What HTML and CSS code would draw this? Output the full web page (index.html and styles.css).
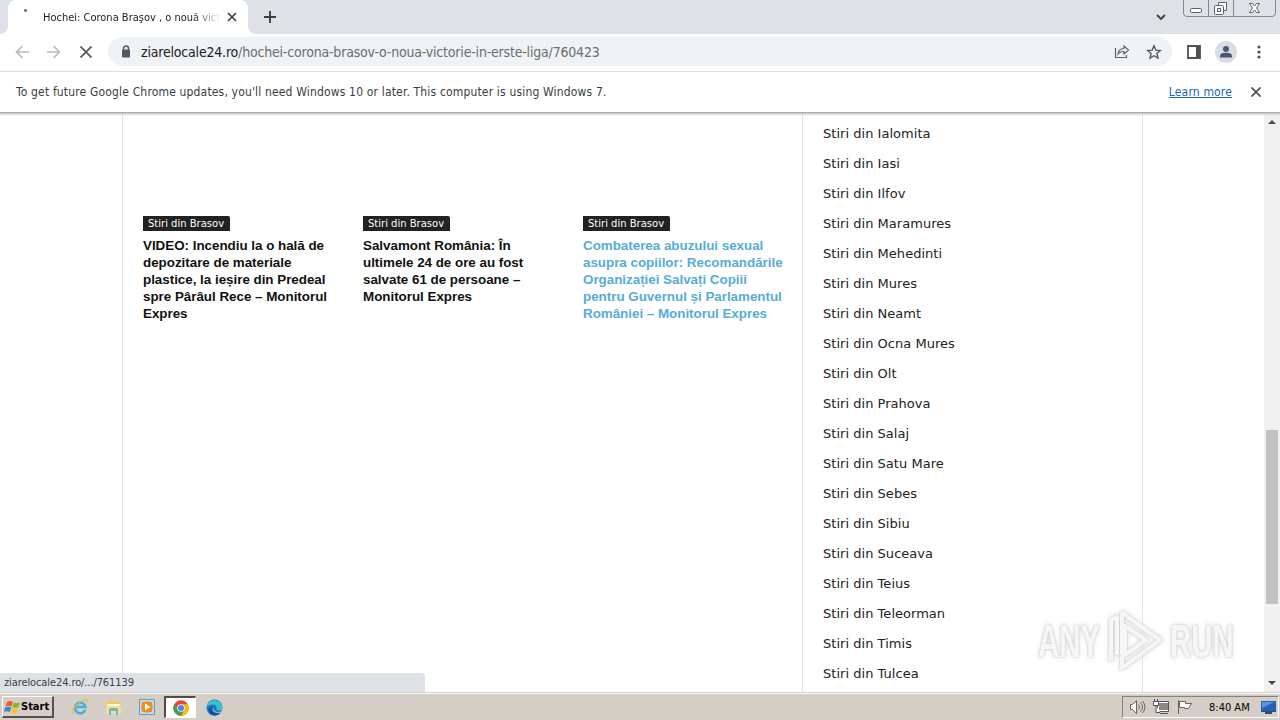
FILE: index.html
```html
<!DOCTYPE html>
<html lang="ro">
<head>
<meta charset="utf-8">
<title>Hochei: Corona Braşov , o nouă victorie</title>
<link rel="stylesheet" href="styles.css">
</head>
<body>
<div class="desktop">
  <header class="tabstrip">
    <div class="strip-left"></div>
    <div class="tab">
      <span class="spinner"></span>
      <span class="tab-title">Hochei: Corona Braşov , o nouă vict</span>
      <svg class="tab-close" width="10" height="10" viewBox="0 0 10 10"><path d="M1 1l8 8M9 1l-8 8" stroke="#3c4043" stroke-width="1.7"/></svg>
    </div>
    <div class="strip-right">
      <svg class="plus" width="12" height="12" viewBox="0 0 12 12"><path d="M6 0v12M0 6h12" stroke="#3c4043" stroke-width="1.9"/></svg>
      <svg class="chevron" width="10" height="7" viewBox="0 0 10 7"><path d="M1 1l4 4 4-4" fill="none" stroke="#3c4043" stroke-width="1.9"/></svg>
      <svg class="winbuttons" width="94" height="18" viewBox="0 0 94 18" fill="none">
        <path d="M.5 0v13q0 3.500 3.500 3.500h85q3.500 0 3.500-3.500V0M25.500 0v16.500M50.500 0v16.500" stroke="#83878f"/>
        <rect x="7.500" y="8.500" width="11" height="4" rx="1" fill="#fff" stroke="#5d6169"/>
        <path d="M35.500 5V2.500h8v8H41" fill="#fff" stroke="#5d6169"/>
        <rect x="31.500" y="5.500" width="9" height="9" rx="1" fill="#fff" stroke="#5d6169"/>
        <rect x="34.500" y="8.500" width="3" height="3" stroke="#5d6169"/>
        <path d="M66.500 3.500h3l2 2.500 2-2.500h3l-3 4.500 3 4.500h-3l-2-2.500-2 2.500h-3l3-4.500z" fill="#fff" stroke="#5d6169"/>
      </svg>
    </div>
  </header>

  <nav class="toolbar">
    <svg class="back" width="14" height="14" viewBox="0 0 14 14"><path d="M14 7H1.500M7.500 1l-6 6 6 6" fill="none" stroke="#b8babd" stroke-width="1.700"/></svg>
    <svg class="forward" width="14" height="14" viewBox="0 0 14 14"><path d="M0 7h12.500M6.500 1l6 6-6 6" fill="none" stroke="#b8babd" stroke-width="1.700"/></svg>
    <svg class="stop" width="12" height="12" viewBox="0 0 12 12"><path d="M.5.5l11 11M11.500.5l-11 11" stroke="#55595d" stroke-width="1.800"/></svg>
    <div class="omnibox">
      <svg class="lock" width="10" height="13" viewBox="0 0 10 13"><path d="M2.500 5V3.500a2.500 2.500 0 0 1 5 0V5" fill="none" stroke="#55595e" stroke-width="1.500"/><rect x="1" y="4.500" width="8" height="8" rx="1" fill="#55595e"/></svg>
      <span class="url"><b>ziarelocale24.ro</b>/hochei-corona-brasov-o-noua-victorie-in-erste-liga/760423</span>
      <svg class="share" width="16" height="15" viewBox="0 0 16 15" fill="none" stroke="#5f6368" stroke-width="1.200"><path d="M1.500 4v9.500h11V11"/><path d="M4 10q.5-5 6-5.500V2l4.500 4-4.500 4V7.500Q6 7.500 4 10z"/></svg>
      <svg class="star" width="16" height="16" viewBox="0 0 16 16"><path d="M8 1.800l1.800 4.300 4.600.4-3.500 3 1.100 4.600L8 11.700l-4 2.400 1.100-4.600-3.500-3 4.600-.4z" fill="none" stroke="#55595e" stroke-width="1.400"/></svg>
    </div>
    <svg class="panel" width="14" height="14" viewBox="0 0 14 14"><path d="M1 1h12v12H1z" fill="none" stroke="#4d5156" stroke-width="1.800"/><path d="M9 1h4v12H9z" fill="#4d5156"/></svg>
    <svg class="avatar" width="22" height="22" viewBox="0 0 22 22"><circle cx="11" cy="11" r="11" fill="#dadee3"/><circle cx="11" cy="8" r="3" fill="#4a5677"/><path d="M5 16.500v-1.500q0-3.200 6-3.200t6 3.200v1.500z" fill="#4a5677"/></svg>
    <svg class="dots" width="4" height="14" viewBox="0 0 4 14" fill="#4d5156"><circle cx="2" cy="2" r="1.600"/><circle cx="2" cy="7" r="1.600"/><circle cx="2" cy="12" r="1.600"/></svg>
  </nav>

  <div class="infobar">
    <span class="notice">To get future Google Chrome updates, you'll need Windows 10 or later. This computer is using Windows 7.</span>
    <a class="learn">Learn more</a>
    <svg width="10" height="10" viewBox="0 0 10 10"><path d="M.5.5l9 9M9.500.5l-9 9" stroke="#505458" stroke-width="1.800"/></svg>
  </div>

  <div class="viewport">
    <div class="page">
      <main class="articles">
        <article class="card"><span class="tag">Stiri din Brasov</span>
          <h3>VIDEO: Incendiu la o hală de<br>depozitare de materiale<br>plastice, la ieșire din Predeal<br>spre Pârâul Rece – Monitorul<br>Expres</h3></article>
        <article class="card"><span class="tag">Stiri din Brasov</span>
          <h3>Salvamont România: În<br>ultimele 24 de ore au fost<br>salvate 61 de persoane –<br>Monitorul Expres</h3></article>
        <article class="card hovered"><span class="tag">Stiri din Brasov</span>
          <h3>Combaterea abuzului sexual<br>asupra copiilor: Recomandările<br>Organizației Salvați Copiii<br>pentru Guvernul și Parlamentul<br>României – Monitorul Expres</h3></article>
      </main>
      <ul class="regions">
        <li>Stiri din Ialomita</li><li>Stiri din Iasi</li><li>Stiri din Ilfov</li><li>Stiri din Maramures</li><li>Stiri din Mehedinti</li><li>Stiri din Mures</li><li>Stiri din Neamt</li><li>Stiri din Ocna Mures</li><li>Stiri din Olt</li><li>Stiri din Prahova</li><li>Stiri din Salaj</li><li>Stiri din Satu Mare</li><li>Stiri din Sebes</li><li>Stiri din Sibiu</li><li>Stiri din Suceava</li><li>Stiri din Teius</li><li>Stiri din Teleorman</li><li>Stiri din Timis</li><li>Stiri din Tulcea</li>
      </ul>
    </div>
    <div class="scrollbar">
      <svg width="8" height="4" viewBox="0 0 8 4"><path d="M0 4l4-4 4 4z" fill="#4c4c4c"/></svg>
      <div class="thumb"></div>
      <svg class="down" width="8" height="4" viewBox="0 0 8 4"><path d="M0 0l4 4 4-4z" fill="#4c4c4c"/></svg>
    </div>
    <div class="status">ziarelocale24.ro/.../761139</div>
    <div class="watermark">
      <span>ANY</span>
      <svg width="60" height="64" viewBox="0 0 60 64" fill="none" stroke="currentColor" stroke-width="4" stroke-linejoin="round"><path d="M5 52V11l6-3v38"/><path d="M16 46V4l38 27-38 28V48l24-17L19 17v30"/></svg>
      <span>RUN</span>
    </div>
  </div>

  <footer class="taskbar">
    <div class="start">
      <svg width="17" height="16" viewBox="0 0 17 16"><path d="M3 3q3-2 6 0L7.500 7.500q-3-1.500-6 0z" fill="#ee5b25"/><path d="M10 3.500q3 1.500 6 0l-1.500 4.500q-3 1.500-6 0z" fill="#80b829"/><path d="M1.200 8.500q3-1.500 6 0L5.700 13q-3-1.500-6 0z" fill="#3188d8"/><path d="M8.200 9q3 1.500 6 0l-1.500 4.500q-3 1.500-6 0z" fill="#fac32a"/></svg>
      <span>Start</span>
    </div>
    <svg class="ie" width="18" height="18" viewBox="0 0 18 18" fill="none"><path d="M14.200 12A5.300 5.300 0 1 1 14.500 9H5" stroke="#45ace4" stroke-width="2.600"/><path d="M2 15.500C-1 13 6 5 13 2q4-1.500 3.500 2" stroke="#edba3a" stroke-width="1.300"/></svg>
    <svg class="folder" width="17" height="17" viewBox="0 0 17 17"><path d="M1 3h5l1-1h8v12H1z" fill="#e9c965"/><path d="M2 5h13v3H2z" fill="#fff8cc"/><path d="M1 7h15v8H1z" fill="#f4df91"/><path d="M4 16v-5q0-2 2-2h5q2 0 2 2v5h-2v-4H6v4z" fill="#68b5dd"/></svg>
    <svg class="media" width="16" height="16" viewBox="0 0 16 16"><path d="M.5.5h15v15H.5z" fill="#bddcf3" stroke="#669bc5"/><path d="M3 3h10v10H3z" fill="#f58b17"/><circle cx="8" cy="8" r="5.800" fill="#f58b17"/><path d="M6 4.500l5.500 3.500L6 11.500z" fill="#fff"/></svg>
    <div class="active-task"><svg width="16" height="16" viewBox="0 0 48 48"><circle cx="24" cy="24" r="23" fill="#e94435"/><path d="M4.100 12.500A23 23 0 0 0 24 47l10-17.300A11.500 11.500 0 0 1 14 29.700z" fill="#34a853"/><path d="M24 47A23 23 0 0 0 43.900 12.500H24a11.500 11.500 0 0 1 10 17.300z" fill="#fbbc04"/><circle cx="24" cy="24" r="11.500" fill="#fff"/><circle cx="24" cy="24" r="9" fill="#4285f4"/></svg></div>
    <svg class="edge" width="17" height="17" viewBox="0 0 17 17"><circle cx="8.500" cy="8.500" r="8" fill="#1478c8"/><path d="M.8 7A8 8 0 0 1 16.500 8q.3 3.500-3.500 3.500-3 0-2.500-2Q11 6 7 5.500 3 5.200.8 8z" fill="#35c2c9"/><path d="M6 8q-1.500 4 2.500 6 3 1 6-1-2 3.500-6 3.500Q3 16 2.500 11 3 7.500 6 8z" fill="#104f9b"/><path d="M7.500 8.500q-.5 4 4 4.500 3 0 5-1.500v1.500l-2 .5q-4 1-6.500-1-2-2-.5-4z" fill="#d5cec6"/></svg>
    <div class="tray">
      <svg width="17" height="16" viewBox="0 0 17 16" fill="none" stroke="#66645f"><path d="M1.500 5.500h2l4-4v13l-4-4h-2z" fill="#fff"/><path d="M9.500 5.500q2 2.500 0 5M11.500 3.500q4 4.500 0 9M13.500 2q5 6 0 12"/></svg>
      <svg width="17" height="16" viewBox="0 0 17 16"><path d="M5.500 3.500h10v8h-10z" fill="#8a8882" stroke="#fff"/><path d="M4.500 2.500h11v10h-11zM7 14.500h8" fill="none" stroke="#55534f"/><path d="M.5 2.500h5v4h-5zM1.500 0v2M4.500 0v2M3 6.500v7h4" fill="#fff" stroke="#55534f"/></svg>
      <svg width="17" height="16" viewBox="0 0 17 16"><path d="M1.500 1v14" stroke="#66645f"/><path d="M2.500 2.500h6v2h6l-3 5h-4v-1h-5z" fill="#fff" stroke="#66645f"/></svg>
      <span class="clock">8:40 AM</span>
      <svg class="desktop-icon" width="17" height="15" viewBox="0 0 17 15"><path d="M1 1h15v10H1z" fill="#2462b7"/><path d="M2 2h12L2 8z" fill="#5b98dd"/><path d="M1 11h15v1H1zM5 12h7v2H5z" fill="#334b75"/></svg>
    </div>
  </footer>
</div>
</body>
</html>
```
FILE: styles.css
```css
* { box-sizing: border-box; }
body { margin: 0; width: 1280px; height: 720px; overflow: hidden; background: #fff; color: #222; font-family: "DejaVu Sans Condensed", "DejaVu Sans", sans-serif; white-space: nowrap; }
svg { display: block; flex: none; }
.desktop { width: 1280px; height: 720px; display: flex; flex-direction: column; }
.tabstrip { height: 34px; flex: none; display: flex; background: #fff; }
.strip-left { width: 8px; background: #dee1e6; border-bottom-right-radius: 8px; }
.tab { width: 240px; background: linear-gradient(#dee1e6 0 0) left top / 100% 10px no-repeat, #fff; display: flex; align-items: center; position: relative; z-index: 0; }
.tab::before { content: ""; position: absolute; inset: 0; background: #fff; border-radius: 8px 8px 0 0; z-index: -1; }
.spinner { width: 3px; height: 3px; background: #6a7ba9; border-radius: 1px; margin: -13px 15px 0 16px; }
.tab-title { width: 178px; margin-left: 1px; font-size: 11px; letter-spacing: 0; -webkit-mask-image: linear-gradient(90deg, #000 150px, transparent 178px); }
.tab-close { margin-left: 6px; }
.strip-right { flex: 1; background: #dee1e6; border-bottom-left-radius: 8px; display: flex; align-items: flex-start; }
.plus { margin: 11px 0 0 16px; }
.chevron { margin: 14px 17px 0 auto; }
.winbuttons { margin-right: 3px; }
.toolbar { height: 38px; flex: none; display: flex; align-items: center; padding: 0 19px 2px 15px; border-bottom: 1px solid #dadce0; }
.forward { margin-left: 18px; }
.stop { margin-left: 19px; }
.omnibox { width: 1064px; height: 29px; margin-left: 16px; border-radius: 15px; background: #f0f3f5; display: flex; align-items: center; padding: 0 10px 0 13px; }
.lock { margin-top: 0; }
.url { margin: 1px auto 0 10px; font-size: 14px; color: #6a6e73; letter-spacing: -.19px; }
.url b { font-weight: normal; color: #202124; }
.star { margin-left: 16px; }
.panel { margin-left: 15px; }
.avatar { margin-left: 14px; }
.dots { margin-left: auto; }
.infobar { height: 40px; flex: none; display: flex; align-items: center; padding: 0 19px 0 16px; font-size: 12px; letter-spacing: .165px; color: #3a3d40; }
.learn { margin-left: auto; margin-right: 19px; color: #1967b8; text-decoration: underline; }
.viewport { height: 580px; flex: none; position: relative; display: flex; border-top: 1px solid #a9a9a9; }
.viewport::before { content: ""; position: absolute; inset: 0 0 auto; height: 3px; background: linear-gradient(#c8c8c8, #fff0); z-index: 2; }
.page { width: 1021px; margin-left: 122px; display: flex; border: solid #e1e1e1; border-width: 0 1px; overflow: hidden; }
.articles { width: 679px; flex: none; padding: 103px 20px 0; display: grid; grid-template-columns: repeat(3, 200px); gap: 20px; }
.tag { display: block; width: 87px; height: 15px; padding-left: 5px; font: 10px/15px "DejaVu Sans", sans-serif; color: #fff; background: #222; border-radius: 0 2px 0 0; }
.card h3 { margin: 6px 0 0; font: bold 13.4px/17px "Liberation Sans", Arial, sans-serif; letter-spacing: -.02px; color: #111; }
.card.hovered h3 { color: #58acd5; }
.regions { flex: 1; margin: 0; padding: 6px 0 0 20px; border-left: 1px solid #e1e1e1; list-style: none; font: 13px/30px "DejaVu Sans", sans-serif; letter-spacing: .03px; color: #222; }
.scrollbar { width: 16px; margin-left: auto; background: #f1f1f1; display: flex; flex-direction: column; align-items: center; padding: 7px 0; }
.thumb { width: 12px; height: 174px; margin-top: 306px; background: #c1c1c1; }
.down { margin-top: auto; }
.status { position: absolute; left: 0; bottom: 0; width: 425px; height: 19px; padding-left: 4px; background: #dee1e6; border-top-right-radius: 4px; font-size: 11px; line-height: 20px; letter-spacing: -.1px; color: #3c4043; }
.watermark { position: absolute; left: 1038px; top: 495px; width: 196px; height: 66px; display: flex; align-items: center; justify-content: space-between; color: #f6f6f6; filter: drop-shadow(0 0 1px #ccc) drop-shadow(0 0 2px #ddd); }
.watermark span { display: block; width: 64px; font: bold 46px/60px "Liberation Sans", Arial, sans-serif; transform: scaleX(.64); transform-origin: left; }
.taskbar { height: 28px; flex: none; display: flex; align-items: center; background: #d5cec6; border-top: 1px solid #d5cec6; box-shadow: inset 0 1px #fff; padding: 1px 1px 0 2px; color: #000; }
.start { width: 52px; height: 22px; display: flex; align-items: center; padding-left: 1px; border: solid; border-width: 1px 2px 2px 1px; border-color: #fff #55514d #55514d #fff; }
.start span { font: bold 11px "DejaVu Sans Condensed", sans-serif; }
.ie { margin-left: 17px; }
.folder { margin-left: 16px; }
.media { margin-left: 17px; }
.active-task { width: 32px; height: 22px; margin-left: 9px; display: flex; align-items: center; justify-content: center; background: #fff; border: solid; border-width: 2px 1px 1px 2px; border-color: #504d49 #fff #fff #504d49; }
.edge { margin-left: 10px; }
.tray { width: 157px; height: 22px; margin-left: auto; border: 1px solid; border-color: #85817c #fff #fff #85817c; display: flex; align-items: center; padding: 0 1px 0 6px; gap: 7px; }
.clock { margin-left: 8px; font-size: 11px; }
.desktop-icon { margin-left: auto; }
```
